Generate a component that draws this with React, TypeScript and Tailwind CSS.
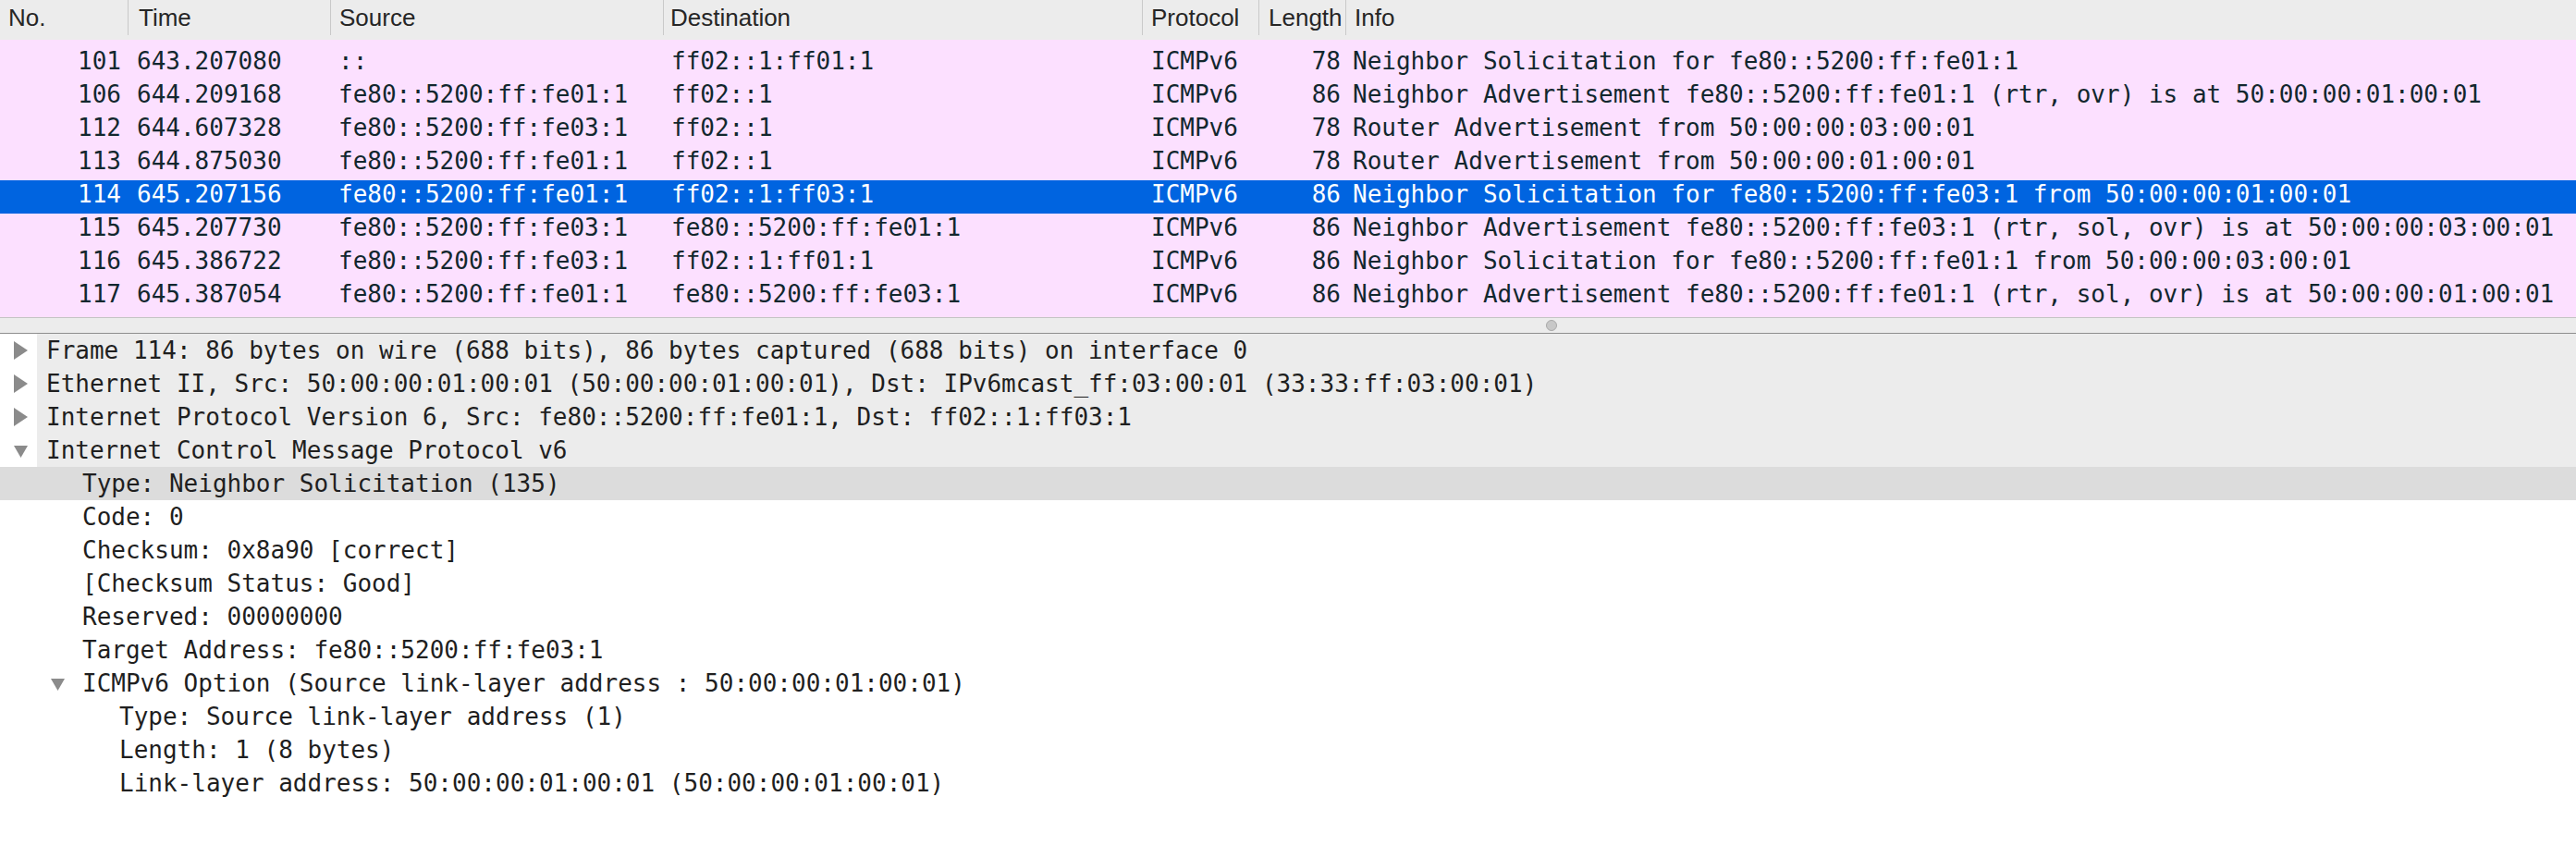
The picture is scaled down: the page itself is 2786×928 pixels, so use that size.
import React from "react";

const rows = [
  ["101", "643.207080", "::", "ff02::1:ff01:1", "ICMPv6", "78", "Neighbor Solicitation for fe80::5200:ff:fe01:1"],
  ["106", "644.209168", "fe80::5200:ff:fe01:1", "ff02::1", "ICMPv6", "86", "Neighbor Advertisement fe80::5200:ff:fe01:1 (rtr, ovr) is at 50:00:00:01:00:01"],
  ["112", "644.607328", "fe80::5200:ff:fe03:1", "ff02::1", "ICMPv6", "78", "Router Advertisement from 50:00:00:03:00:01"],
  ["113", "644.875030", "fe80::5200:ff:fe01:1", "ff02::1", "ICMPv6", "78", "Router Advertisement from 50:00:00:01:00:01"],
  ["114", "645.207156", "fe80::5200:ff:fe01:1", "ff02::1:ff03:1", "ICMPv6", "86", "Neighbor Solicitation for fe80::5200:ff:fe03:1 from 50:00:00:01:00:01"],
  ["115", "645.207730", "fe80::5200:ff:fe03:1", "fe80::5200:ff:fe01:1", "ICMPv6", "86", "Neighbor Advertisement fe80::5200:ff:fe03:1 (rtr, sol, ovr) is at 50:00:00:03:00:01"],
  ["116", "645.386722", "fe80::5200:ff:fe03:1", "ff02::1:ff01:1", "ICMPv6", "86", "Neighbor Solicitation for fe80::5200:ff:fe01:1 from 50:00:00:03:00:01"],
  ["117", "645.387054", "fe80::5200:ff:fe01:1", "fe80::5200:ff:fe03:1", "ICMPv6", "86", "Neighbor Advertisement fe80::5200:ff:fe01:1 (rtr, sol, ovr) is at 50:00:00:01:00:01"],
];

const grid = "grid grid-cols-[138px_219px_360px_518px_126px_94px_1fr]";

function RightTri() {
  return (
    <svg width="15" height="20" viewBox="0 0 15 20" className="block">
      <polygon points="0,0 15,10 0,20" fill="#8b8b8b" />
    </svg>
  );
}

function DownTri() {
  return (
    <svg width="15" height="13" viewBox="0 0 15 13" className="block">
      <polygon points="0,0 15,0 7.5,13" fill="#8b8b8b" />
    </svg>
  );
}

type Node = { level: number; text: string; tri?: "right" | "down"; kind?: "parent" | "sel" };

const tree: Node[] = [
  { level: 0, text: "Frame 114: 86 bytes on wire (688 bits), 86 bytes captured (688 bits) on interface 0", tri: "right", kind: "parent" },
  { level: 0, text: "Ethernet II, Src: 50:00:00:01:00:01 (50:00:00:01:00:01), Dst: IPv6mcast_ff:03:00:01 (33:33:ff:03:00:01)", tri: "right", kind: "parent" },
  { level: 0, text: "Internet Protocol Version 6, Src: fe80::5200:ff:fe01:1, Dst: ff02::1:ff03:1", tri: "right", kind: "parent" },
  { level: 0, text: "Internet Control Message Protocol v6", tri: "down", kind: "parent" },
  { level: 1, text: "Type: Neighbor Solicitation (135)", kind: "sel" },
  { level: 1, text: "Code: 0" },
  { level: 1, text: "Checksum: 0x8a90 [correct]" },
  { level: 1, text: "[Checksum Status: Good]" },
  { level: 1, text: "Reserved: 00000000" },
  { level: 1, text: "Target Address: fe80::5200:ff:fe03:1" },
  { level: 1, text: "ICMPv6 Option (Source link-layer address : 50:00:00:01:00:01)", tri: "down" },
  { level: 2, text: "Type: Source link-layer address (1)" },
  { level: 2, text: "Length: 1 (8 bytes)" },
  { level: 2, text: "Link-layer address: 50:00:00:01:00:01 (50:00:00:01:00:01)" },
];

function TreeRow({ n }: { n: Node }) {
  if (n.kind === "parent") {
    return (
      <div className="flex h-[36px]">
        <div className="flex w-[40px] items-center bg-white pl-[15px]">
          {n.tri === "right" ? <RightTri /> : <div className="pt-[2px]"><DownTri /></div>}
        </div>
        <div className="flex flex-1 items-center bg-[#ececec] pl-[10px] leading-[36px] whitespace-pre">{n.text}</div>
      </div>
    );
  }
  const bg = n.kind === "sel" ? "bg-[#dcdcdc]" : "bg-white";
  if (n.level === 1) {
    return (
      <div className={`flex h-[36px] items-center ${bg}`}>
        <div className="flex w-[89px] items-center pl-[55px]">
          {n.tri === "down" ? <div className="pt-[2px]"><DownTri /></div> : null}
        </div>
        <div className="leading-[36px] whitespace-pre">{n.text}</div>
      </div>
    );
  }
  return (
    <div className={`flex h-[36px] items-center ${bg} pl-[129px]`}>
      <div className="leading-[36px] whitespace-pre">{n.text}</div>
    </div>
  );
}

export default function App() {
  return (
    <div className="flex h-[928px] w-[2786px] flex-col overflow-hidden bg-white">
      {/* Column header */}
      <div className={`${grid} h-[43px] shrink-0 items-start bg-[#ececec] font-['Liberation_Sans',Arial,sans-serif] text-[26px] text-[#262626]`}>
        <div className="flex h-[38px] items-center pl-[9px]">No.</div>
        <div className="flex h-[38px] items-center border-l border-[#c9c9c9] pl-[11px]">Time</div>
        <div className="flex h-[38px] items-center border-l border-[#c9c9c9] pl-[9px]">Source</div>
        <div className="flex h-[38px] items-center border-l border-[#c9c9c9] pl-[7px]">Destination</div>
        <div className="flex h-[38px] items-center border-l border-[#c9c9c9] pl-[9px]">Protocol</div>
        <div className="flex h-[38px] items-center border-l border-[#c9c9c9] pl-[10px]">Length</div>
        <div className="flex h-[38px] items-center border-l border-[#c9c9c9] pl-[9px]">Info</div>
      </div>

      {/* Packet list */}
      <div className="h-[300px] shrink-0 bg-[#fce0ff] pt-[8px] font-['DejaVu_Sans_Mono',monospace] text-[26px] text-[#12272e]">
        {rows.map((r) => {
          const sel = r[0] === "114";
          return (
            <div key={r[0]} className={`${grid} h-[36px] items-start leading-[30px] whitespace-pre ${sel ? "bg-[#0064e0] text-white" : ""}`}>
              <div className="pr-[7px] text-right">{r[0]}</div>
              <div className="pl-[10px]">{r[1]}</div>
              <div className="pl-[9px]">{r[2]}</div>
              <div className="pl-[9px]">{r[3]}</div>
              <div className="pl-[10px]">{r[4]}</div>
              <div className="pr-[5px] text-right">{r[5]}</div>
              <div className="pl-[8px]">{r[6]}</div>
            </div>
          );
        })}
      </div>

      {/* Splitter */}
      <div className="h-[1px] shrink-0 bg-[#c4c4c4]" />
      <div className="flex h-[16px] shrink-0 items-center bg-[#ececec]">
        <div className="ml-[1672px] h-[12px] w-[12px] rounded-full border border-[#a9a9a9] bg-[#c8c8c8]" />
      </div>
      <div className="h-[1px] shrink-0 bg-[#8e8e8e]" />

      {/* Detail tree */}
      <div className="flex-1 bg-white font-['DejaVu_Sans_Mono',monospace] text-[26px] text-[#1f1f1f]">
        {tree.map((n, i) => (
          <TreeRow key={i} n={n} />
        ))}
      </div>
    </div>
  );
}
